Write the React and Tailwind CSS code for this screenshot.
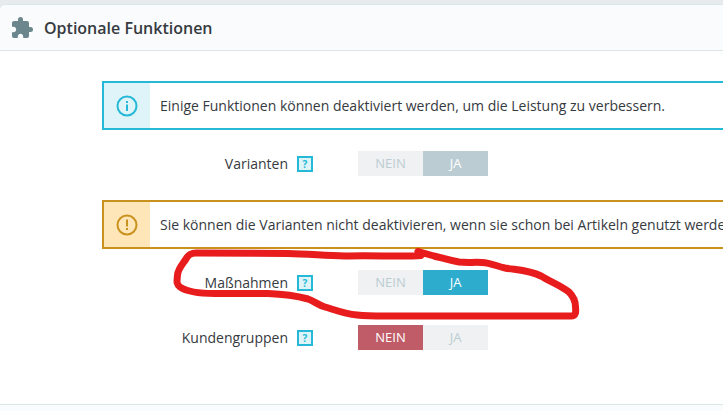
import { useState } from 'react';
import { MdExtension } from 'react-icons/md';

const alertStyles = {
  info: { box: 'border-[#25b9d7]', icon: 'bg-[#dff4f9] text-[#25b9d7]' },
  warning: { box: 'border-[#c9921e]', icon: 'bg-[#ffe6b8] text-[#c9921e]' },
};

const activeStyles = {
  disabled: 'bg-[#bbcdd2] text-white font-medium',
  yes: 'bg-[#2eacce] text-white font-medium',
  no: 'bg-[#c05c67] text-white font-medium',
};

function InfoIcon() {
  return (
    <svg viewBox="0 0 22 22" className="size-[22px]" fill="none" stroke="currentColor" strokeWidth="2" aria-hidden="true">
      <circle cx="11" cy="11" r="9.5" />
      <path d="M11 9.5v6.5M11 6v2" />
    </svg>
  );
}

function WarningIcon() {
  return (
    <svg viewBox="0 0 22 22" className="size-[22px]" fill="none" stroke="currentColor" strokeWidth="2" aria-hidden="true">
      <circle cx="11" cy="11" r="9.5" />
      <path d="M11 5.5v7M11 14v2" />
    </svg>
  );
}

function Alert({ type, children }) {
  const style = alertStyles[type];
  return (
    <div role="alert" className={`ml-[102px] flex h-[49px] overflow-hidden border-2 border-r-0 ${style.box}`}>
      <div className={`flex w-[46px] shrink-0 items-center justify-center ${style.icon}`}>
        {type === 'info' ? <InfoIcon /> : <WarningIcon />}
      </div>
      <p className="self-center pl-2.5 text-sm whitespace-nowrap">{children}</p>
    </div>
  );
}

function SwitchRow({ label, name, initial, disabled }) {
  const [value, setValue] = useState(initial);
  const options = [
    { id: 'no', text: 'NEIN' },
    { id: 'yes', text: 'JA' },
  ];

  return (
    <fieldset className="flex items-center gap-[45px]" disabled={disabled}>
      <div className="flex w-[313px] shrink-0 items-center justify-end gap-[9px]">
        <span id={`${name}-label`} className="text-sm">{label}</span>
        <button type="button" aria-label={`Hilfe: ${label}`} className="flex size-4 items-center justify-center border-2 border-[#25b9d7] bg-[#dff4f9] text-[10px] leading-none font-bold text-[#25b9d7]">
          ?
        </button>
      </div>
      <div role="radiogroup" aria-labelledby={`${name}-label`} className="flex h-[25px]">
        {options.map((o) => (
          <label
            key={o.id}
            className={`relative flex w-[65px] items-center justify-center text-[13px] ${value === o.id ? activeStyles[disabled ? 'disabled' : o.id] : 'bg-[#eff1f2] text-[#bbcdd2]'}`}
          >
            <input type="radio" name={name} value={o.id} checked={value === o.id} onChange={() => setValue(o.id)} className="sr-only" />
            {o.text}
          </label>
        ))}
      </div>
    </fieldset>
  );
}

// Hand-drawn marker around the highlighted row
function Marker() {
  return (
    <svg className="pointer-events-none absolute top-[245px] left-[170px] h-[80px] w-[415px]" viewBox="170 245 415 80" fill="none" stroke="#e81c1c" strokeWidth="7" strokeLinecap="round" strokeLinejoin="round" aria-hidden="true">
      <path d="M418 251.500L421 255.500C402 257 372 255 345 256C320 255 306 254 288 253.500L196 253C190 253 188 255 186 259C182 265 178 269 177.500 275C177 281 176 284 180 287C187 292 201 293.500 215 293.500L268 293.500C282 294 297 296 308 299C314 301 318 305 325 307C335 310 345 314 357 315C367 316 374 316 384 316L571 316C576 316 576 312 575.500 307C575.500 300 573 296 569 292C560 285 549 281 541 276C529 270 516 270 505 268C496 266 491 263 482 262.500C473 262 468 263 459 262C448 260 442 258 434 256L418 251.500" />
    </svg>
  );
}

export default function App() {
  return (
    <div className="relative flex min-h-screen flex-col overflow-hidden bg-[#e8ebeb] pt-1 font-['Open_Sans',sans-serif] text-[#363a41]">
      <section className="flex grow flex-col rounded-tl-md border-t border-[#dbe6e9] bg-white">
        <header className="flex h-[46px] items-center gap-2.5 rounded-tl-md border-b border-[#dbe6e9] bg-[#fafbfc] pl-2.5">
          <MdExtension className="size-6 text-[#6c868e]" aria-hidden="true" />
          <h1 className="text-base font-semibold">Optionale Funktionen</h1>
        </header>
        <form className="pt-[30px] pb-[54px]">
          <Alert type="info">Einige Funktionen können deaktiviert werden, um die Leistung zu verbessern.</Alert>
          <div className="pt-[21px] pb-6">
            <SwitchRow label="Varianten" name="combinations" initial="yes" disabled />
          </div>
          <Alert type="warning">Sie können die Varianten nicht deaktivieren, wenn sie schon bei Artikeln genutzt werden.</Alert>
          <div className="flex flex-col gap-[30px] pt-[21px]">
            <SwitchRow label="Maßnahmen" name="features" initial="yes" />
            <SwitchRow label="Kundengruppen" name="groups" initial="no" />
          </div>
        </form>
        <footer className="grow border-t border-[#dbe6e9] bg-[#fafbfc]" />
      </section>
      <Marker />
    </div>
  );
}
